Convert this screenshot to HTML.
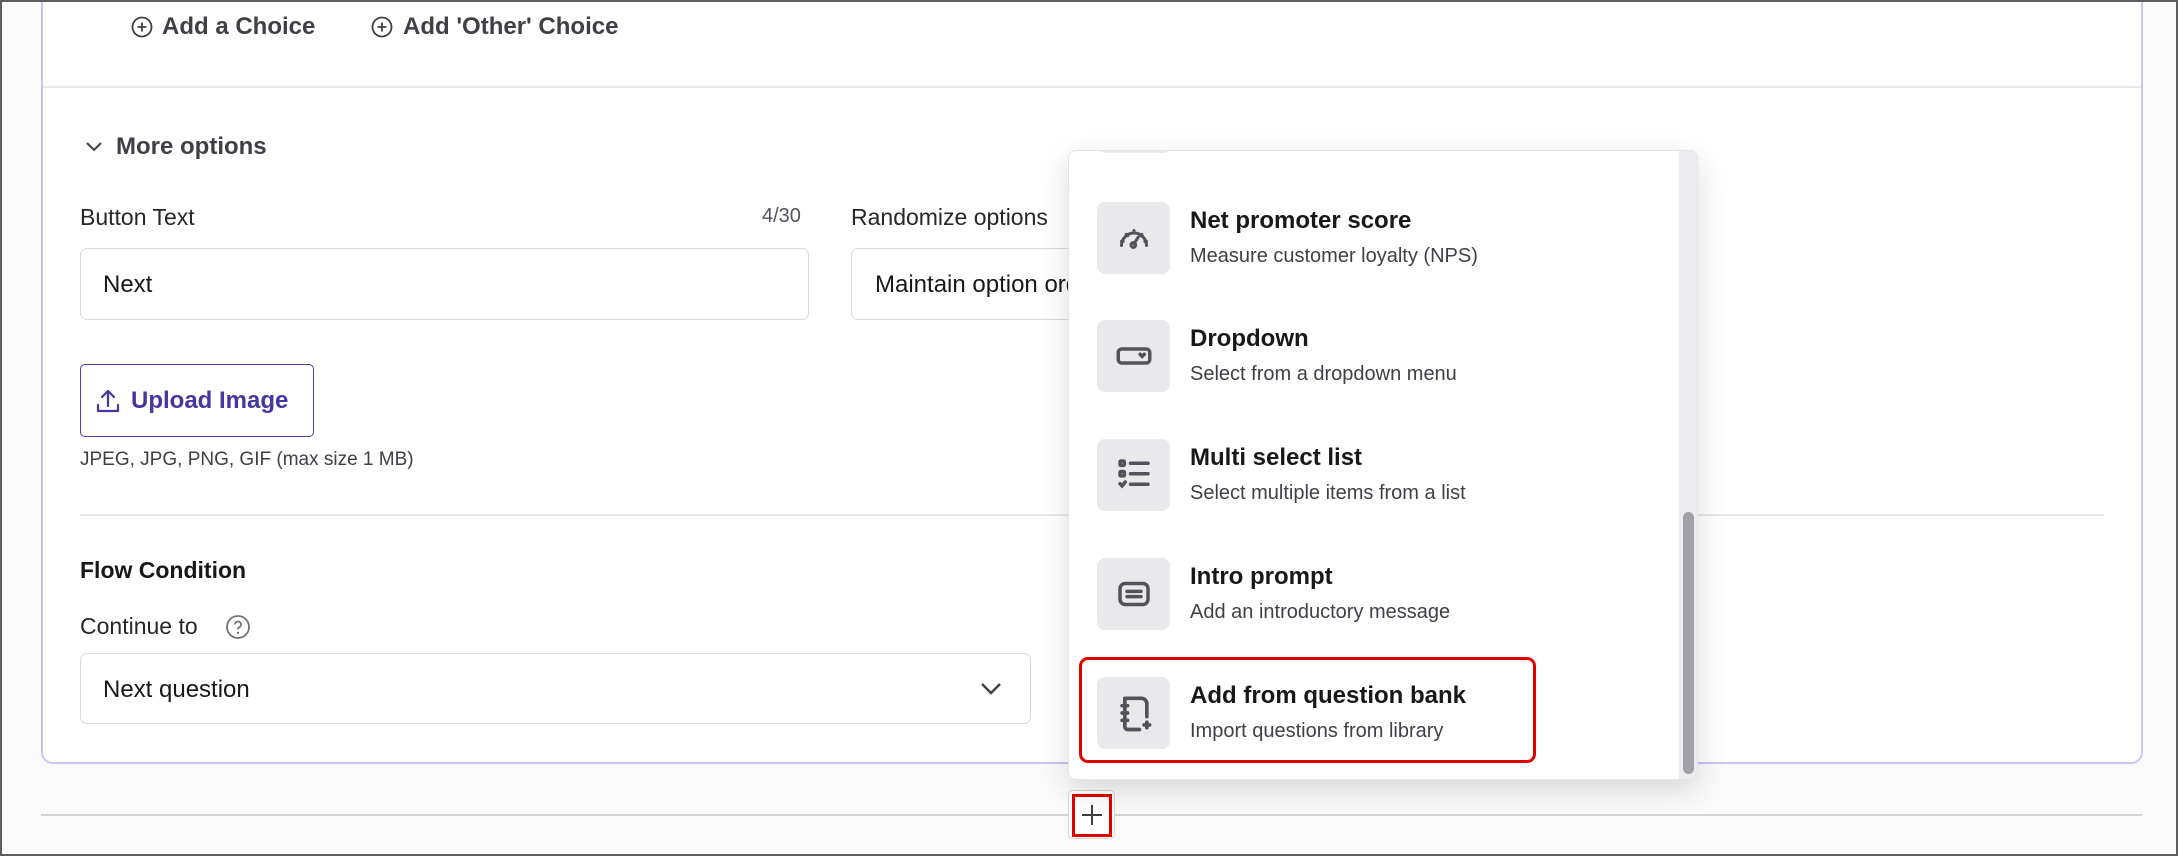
<!DOCTYPE html>
<html><head><meta charset="utf-8"><style>
*{box-sizing:border-box;margin:0;padding:0}
body{width:2178px;height:856px;overflow:hidden;background:#fafafa;font-family:"Liberation Sans",sans-serif;position:relative;color:#27272a}
.frame{position:absolute;inset:0;border:2px solid #5f5f5f;pointer-events:none;z-index:10}
.card{position:absolute;left:41px;top:-10px;width:2102px;height:774px;background:#fff;border:2px solid #c9c4f2;border-radius:12px}
.abs{position:absolute}
.t{position:absolute;white-space:nowrap}
.input{position:absolute;border:1.5px solid #d9d9de;border-radius:7px;background:#fff}
.item .box{position:absolute;left:1097px;width:73px;height:72px;background:#e9e9ec;border-radius:8px;display:flex;align-items:center;justify-content:center}
.ttl{position:absolute;left:1190px;font-size:24px;font-weight:bold;color:#18181b}
.sub{position:absolute;left:1190px;font-size:20px;color:#3f3f46}
</style></head><body>
<div class="card"></div>
<svg class="abs" style="left:131px;top:16px" width="22" height="22" viewBox="0 0 22 22"><circle cx="11" cy="11" r="9.5" fill="none" stroke="#3f3f46" stroke-width="1.8"/><path d="M11 6.5v9M6.5 11h9" stroke="#3f3f46" stroke-width="1.8"/></svg>
<div class="t" style="left:162px;top:13px;font-size:24px;font-weight:bold;color:#3f3f46">Add a Choice</div>
<svg class="abs" style="left:371px;top:16px" width="22" height="22" viewBox="0 0 22 22"><circle cx="11" cy="11" r="9.5" fill="none" stroke="#3f3f46" stroke-width="1.8"/><path d="M11 6.5v9M6.5 11h9" stroke="#3f3f46" stroke-width="1.8"/></svg>
<div class="t" style="left:403px;top:13px;font-size:24px;font-weight:bold;color:#3f3f46">Add 'Other' Choice</div>
<div class="abs" style="left:43px;top:86px;width:2098px;height:1.5px;background:#e8e8eb"></div>
<svg class="abs" style="left:85px;top:140px" width="18" height="14" viewBox="0 0 18 14"><path d="M2 3l7 7 7-7" fill="none" stroke="#3f3f46" stroke-width="2"/></svg>
<div class="t" style="left:116px;top:133px;font-size:24px;font-weight:bold;color:#3f3f46">More options</div>
<div class="t" style="left:80px;top:204px;font-size:23px;color:#27272a">Button Text</div>
<div class="t" style="left:762px;top:205px;font-size:20px;color:#52525b">4/30</div>
<div class="input" style="left:80px;top:248px;width:729px;height:72px"></div>
<div class="t" style="left:103px;top:271px;font-size:24px;color:#18181b">Next</div>
<div class="t" style="left:851px;top:204px;font-size:23px;color:#27272a">Randomize options</div>
<div class="input" style="left:851px;top:248px;width:400px;height:72px"></div>
<div class="t" style="left:875px;top:271px;font-size:24px;color:#18181b">Maintain option order</div>
<div class="abs" style="left:80px;top:364px;width:234px;height:73px;border:1.5px solid #4b3ca8;border-radius:5px"></div>
<svg class="abs" style="left:95px;top:387px" width="26" height="28" viewBox="0 0 26 28"><path d="M13 19V4M7 10l6-6 6 6M3 18v6h20v-6" fill="none" stroke="#4537a0" stroke-width="2.2" stroke-linecap="round" stroke-linejoin="round"/></svg>
<div class="t" style="left:131px;top:387px;font-size:24px;font-weight:bold;color:#4537a0">Upload Image</div>
<div class="t" style="left:80px;top:449px;font-size:19px;color:#3f3f46">JPEG, JPG, PNG, GIF (max size 1 MB)</div>
<div class="abs" style="left:80px;top:514px;width:2024px;height:1.5px;background:#e8e8eb"></div>
<div class="t" style="left:80px;top:557px;font-size:23px;font-weight:bold;color:#18181b">Flow Condition</div>
<div class="t" style="left:80px;top:613px;font-size:23px;color:#27272a">Continue to</div>
<svg class="abs" style="left:225px;top:614px" width="26" height="26" viewBox="0 0 26 26"><circle cx="13" cy="13" r="11" fill="none" stroke="#71717a" stroke-width="1.8"/><path d="M10 10.5a3 3 0 1 1 4 2.8c-.8.4-1 1-1 2" fill="none" stroke="#71717a" stroke-width="1.8"/><circle cx="13" cy="18.8" r="1.2" fill="#71717a"/></svg>
<div class="input" style="left:80px;top:653px;width:951px;height:71px"></div>
<div class="t" style="left:103px;top:676px;font-size:24px;color:#18181b">Next question</div>
<svg class="abs" style="left:979px;top:681px" width="24" height="16" viewBox="0 0 24 16"><path d="M3 3l9 9 9-9" fill="none" stroke="#3f3f46" stroke-width="2.4"/></svg>
<div class="abs" style="left:41px;top:814px;width:2101px;height:2px;background:#d4d4d8"></div>
<div class="abs" style="left:1068px;top:790px;width:47px;height:49px;background:#fff;border:1px solid #d4d4d8;border-radius:5px"></div>
<div class="abs" style="left:1072px;top:794px;width:40px;height:43px;border:3px solid #e00000"></div>
<svg class="abs" style="left:1080px;top:803px" width="24" height="24" viewBox="0 0 24 24"><path d="M12 2v20M2 12h20" stroke="#3f3f46" stroke-width="2"/></svg>
<div class="abs" style="left:1068px;top:150px;width:630px;height:630px;background:#fff;border:1px solid #e4e4e7;border-radius:8px;box-shadow:0 10px 30px rgba(0,0,0,.14);overflow:hidden">
  <div class="abs" style="left:610px;top:0;width:20px;height:630px;background:#ececee"></div>
  <div class="abs" style="left:614px;top:361px;width:11px;height:262px;background:#a1a1aa;border-radius:6px"></div>
  <div class="abs" style="left:29px;top:-70px;width:73px;height:72px;background:#e9e9ec;border-radius:8px"></div>
</div>
<div class="item">
<div class="box" style="top:202px"><svg width="40" height="40" viewBox="0 0 24 24" fill="none" stroke="#52525b" stroke-width="1.8" stroke-linecap="round"><path d="M4.5 16.5a7.5 7.5 0 1 1 15 0"/><path d="M12 15.5l2.5-4"/><circle cx="11.6" cy="16.2" r="1.4"/><path d="M12 7.5v1.3M7.3 9.8l.9.9M16.7 9.8l-.9.9M4.5 14h1M18.5 14h1"/></svg></div>
<div class="ttl" style="top:207px">Net promoter score</div><div class="sub" style="top:245px">Measure customer loyalty (NPS)</div>
<div class="box" style="top:320px"><svg width="42" height="42" viewBox="0 0 24 24" fill="none" stroke="#52525b" stroke-width="2" stroke-linecap="round"><rect x="3" y="8" width="18" height="8" rx="2"/><path d="M15.5 11l1.2 1.2 1.2-1.2"/></svg></div>
<div class="ttl" style="top:325px">Dropdown</div><div class="sub" style="top:363px">Select from a dropdown menu</div>
<div class="box" style="top:439px"><svg width="42" height="42" viewBox="0 0 24 24" fill="none" stroke="#52525b" stroke-width="2" stroke-linecap="round"><rect x="4" y="4" width="2.5" height="2.5" rx=".5"/><rect x="4" y="10" width="2.5" height="2.5" rx=".5"/><path d="M4 17l1.2 1.2L7 16M10 5.3h10M10 11.3h10M10 17.3h10"/></svg></div>
<div class="ttl" style="top:444px">Multi select list</div><div class="sub" style="top:482px">Select multiple items from a list</div>
<div class="box" style="top:558px"><svg width="42" height="42" viewBox="0 0 24 24" fill="none" stroke="#52525b" stroke-width="2" stroke-linecap="round"><rect x="4" y="6" width="16" height="12" rx="3"/><path d="M8 10.5h8M8 13.5h8"/></svg></div>
<div class="ttl" style="top:563px">Intro prompt</div><div class="sub" style="top:601px">Add an introductory message</div>
<div class="box" style="top:677px"><svg width="44" height="44" viewBox="0 0 24 24" fill="none" stroke="#52525b" stroke-width="2" stroke-linecap="round"><path d="M7 4h9a3 3 0 0 1 3 3v7M19 17v3M17.5 18.5h3M15 21H8.5A1.5 1.5 0 0 1 7 19.5V4"/><path d="M5.5 8h3M5.5 12h3M5.5 16h3"/></svg></div>
<div class="ttl" style="top:682px">Add from question bank</div><div class="sub" style="top:720px">Import questions from library</div>
</div>
<div class="abs" style="left:1079px;top:657px;width:457px;height:106px;border:3px solid #e00000;border-radius:9px"></div>
<div class="frame"></div>
</body></html>
